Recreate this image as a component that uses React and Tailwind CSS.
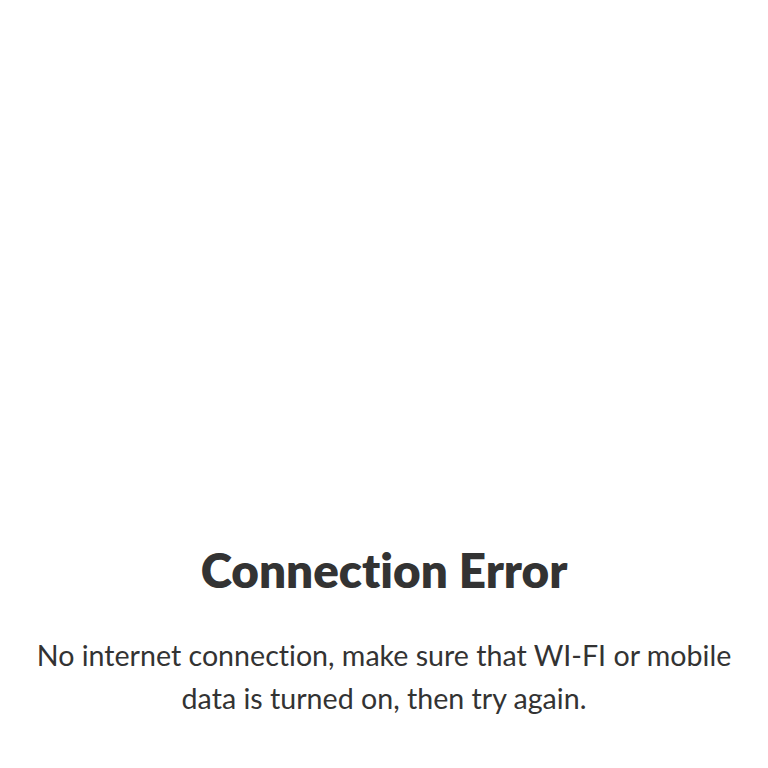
export default function App() {
  return (
    <div className="min-h-[768px] bg-white flex flex-col justify-end items-center pb-[48px] text-[#333333] [font-variant-ligatures:none]" style={{ fontFamily: 'Lato, "Noto Sans", sans-serif' }}>
      <h1 className="text-[47.6px] font-extrabold leading-[56px]">Connection Error</h1>
      <p className="mt-[36px] text-[28.6px] leading-[43px] text-center px-[30px]">
        No internet connection, make sure that WI-FI or mobile data is turned on, then try again.
      </p>
    </div>
  );
}
